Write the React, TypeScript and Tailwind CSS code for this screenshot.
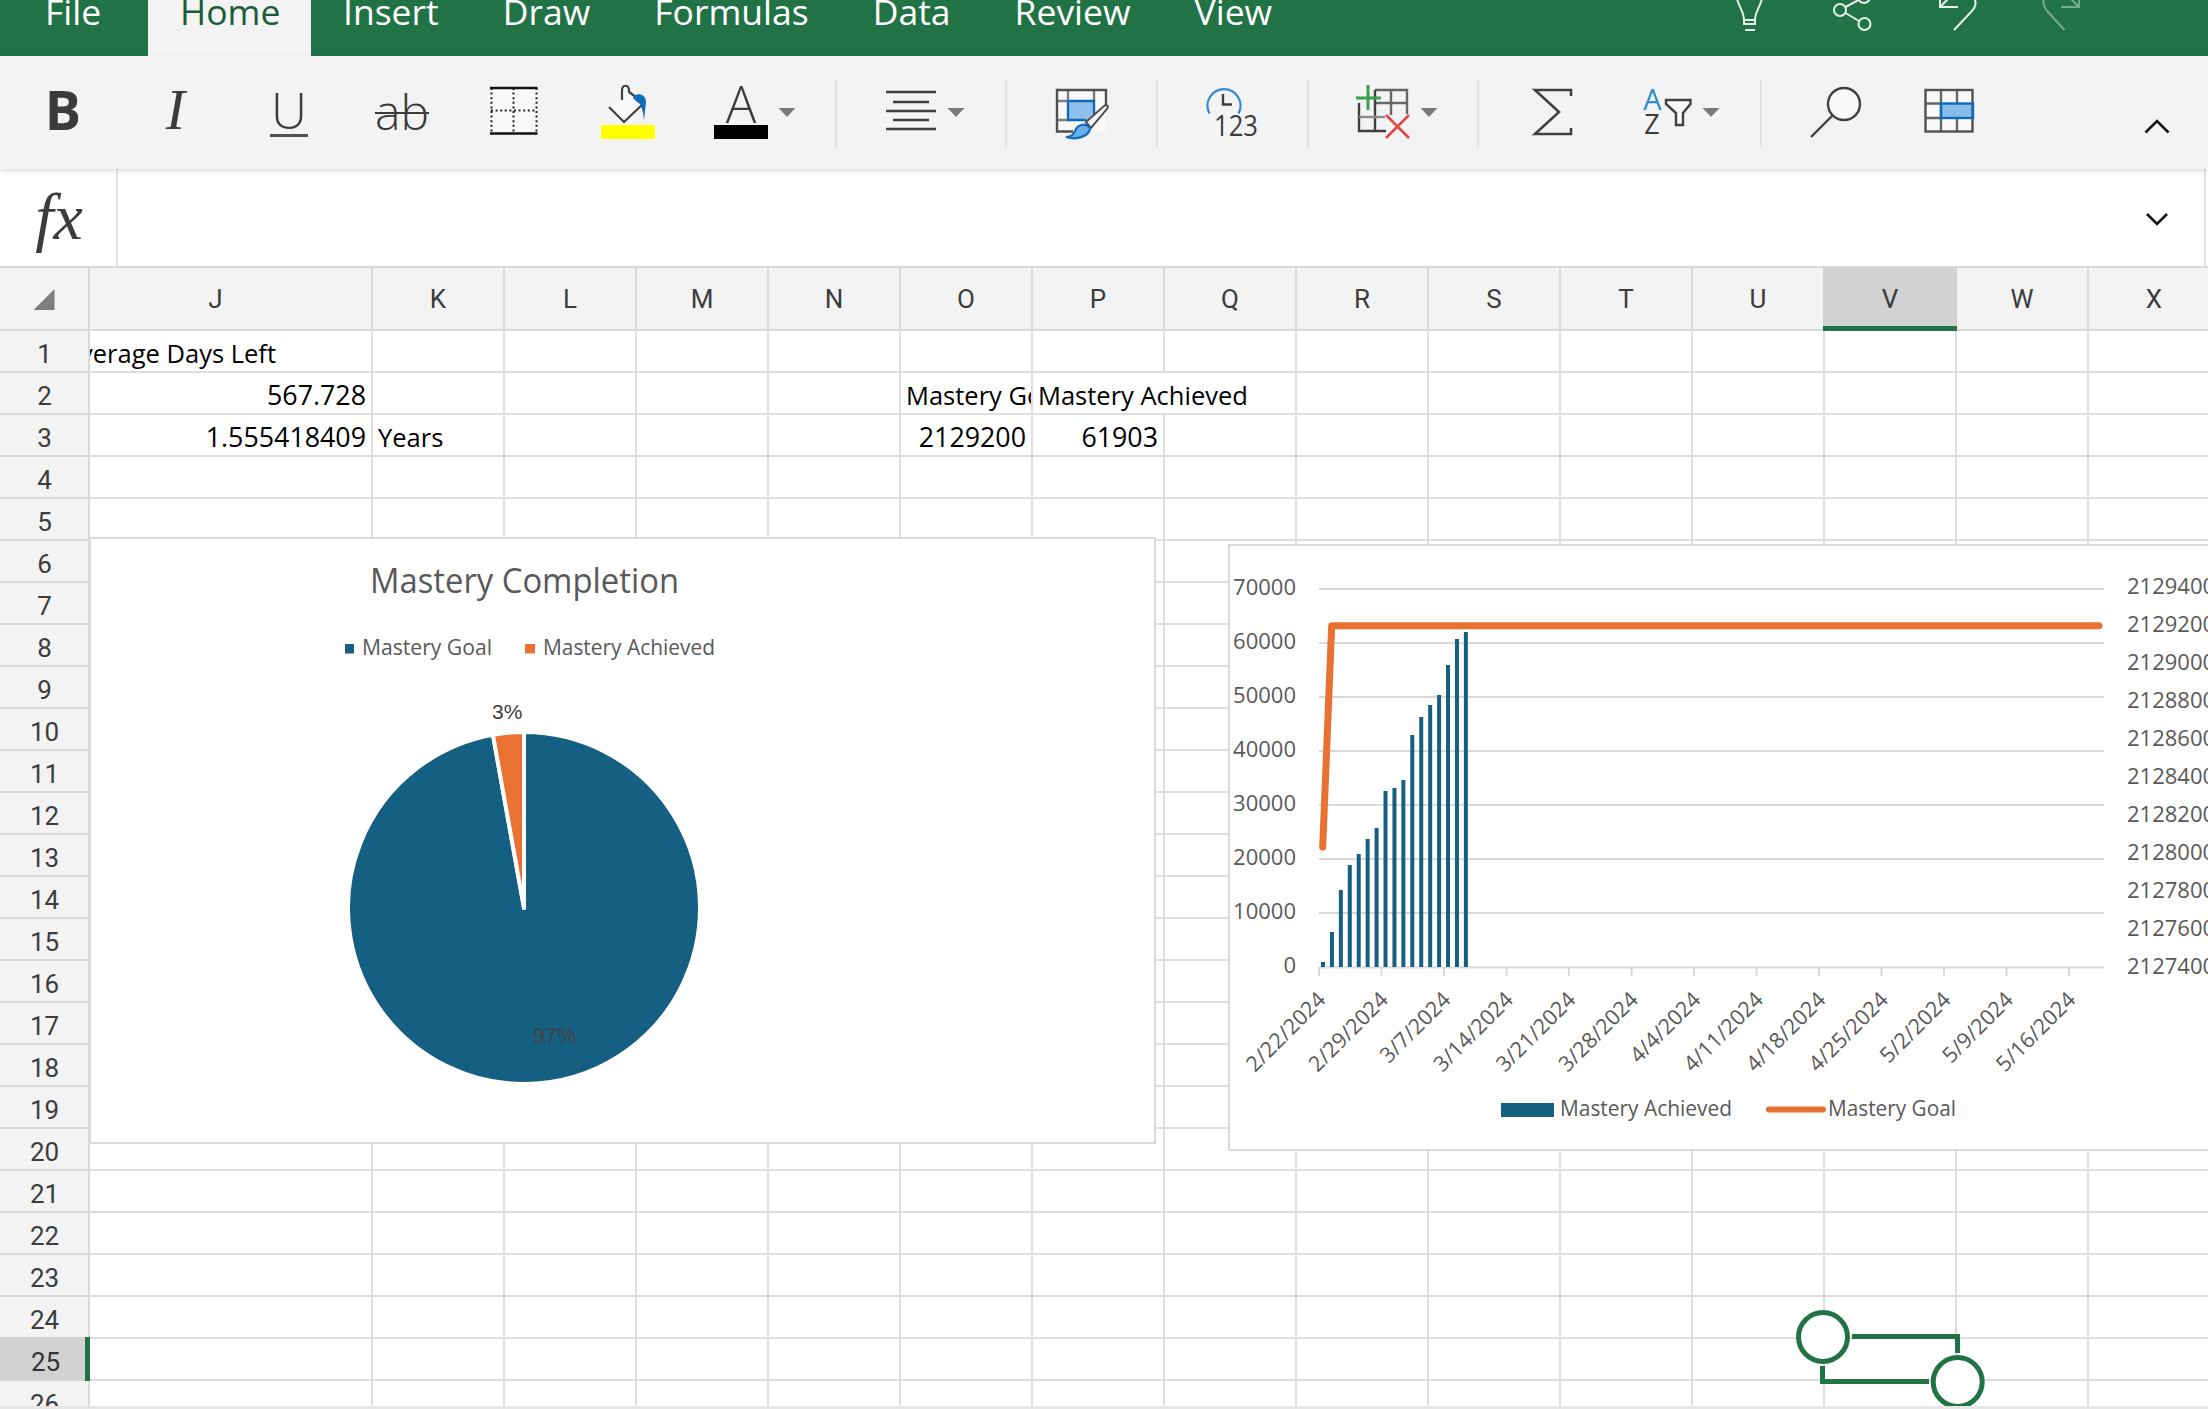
import React from "react";

const COLS = ["J", "K", "L", "M", "N", "O", "P", "Q", "R", "S", "T", "U", "V", "W", "X"];
const ROWS = Array.from({ length: 26 }, (_, i) => i + 1);

function Ico({ x, w, children }: { x: number; w: number; children: React.ReactNode }) {
  return (
    <svg width={w} height={113} viewBox={`${x} 56 ${w} 113`} className="shrink-0 block" fill="none">
      {children}
    </svg>
  );
}
const Sep = () => <div className="w-[2px] h-[68px] bg-[#e1e1e1] shrink-0" />;
const Tri = ({ cx }: { cx: number }) => <path d={`M${cx - 8.5} 108H${cx + 8.5}L${cx} 117Z`} fill="#7b7b7b" />;

function Tabs() {
  const names = ["Insert", "Draw", "Formulas", "Data", "Review", "View"];
  return (
    <div className="h-[56px] bg-[#217346] flex overflow-hidden shrink-0 relative [font-family:'Open_Sans',sans-serif] text-[35.5px] leading-[23px]">
      <div className="flex h-full whitespace-nowrap">
        <div className="pl-[45px] w-[148px] text-white h-full">File</div>
        <div className="w-[163px] pl-[32px] bg-[#f3f3f3] text-[#1a5c38] h-full">Home</div>
        {names.map((n) => (
          <div key={n} className="px-[32px] text-white h-full">
            {n}
          </div>
        ))}
      </div>
      <svg width={488} height={56} viewBox="1720 0 488 56" className="ml-auto block" fill="none">
        <g stroke="#e6f0ea" strokeWidth="2">
          <path d="M1737 -2C1738 6 1744 11 1744 20V24H1755V20C1755 11 1761 6 1762 -2" />
          <path d="M1744 20H1755M1745 30H1755" />
          <circle cx="1840" cy="10" r="6" />
          <circle cx="1864.5" cy="24" r="6" />
          <circle cx="1864" cy="-3" r="6" />
          <path d="M1845.5 7L1858.5 0M1845.5 13L1859 21" />
          <path d="M1940 -1V7H1958M1940 7L1950 -3M1968 -6C1978 -2 1977 6 1971 12L1954 30" />
          <g opacity="0.45">
            <path d="M2079 -1V7H2061M2079 7L2069 -3M2050 -6C2040 -2 2043 6 2048 12L2064.5 30" />
          </g>
        </g>
      </svg>
    </div>
  );
}

function Toolbar() {
  const stroke = "#404040";
  return (
    <div className="relative z-10 h-[113px] bg-[#f3f3f3] flex items-center shrink-0 shadow-[0_2px_5px_rgba(0,0,0,0.14)] text-[#3c3c3c]">
      <div className="w-[126px] flex justify-center pb-[7px] [font-family:'Open_Sans',sans-serif] font-bold text-[54px] leading-none">B</div>
      <div className="w-[99px] flex justify-center pb-[5px] [font-family:'Liberation_Serif',serif] italic text-[58px] leading-none">I</div>
      <div className="w-[128px] flex flex-col items-center [font-family:'Open_Sans',sans-serif] font-light">
        <span className="text-[50px] leading-[47px] border-b-[3px] border-[#505050] px-[1px] h-[50px] mt-[-2px]">U</span>
      </div>
      <div className="w-[96px] flex justify-center pb-[2px] pl-[2px] [font-family:'Open_Sans',sans-serif] font-light text-[48px] leading-none line-through decoration-2">ab</div>
      <Ico x={449} w={129}>
        <rect x="491" y="88" width="46" height="46" fill="#f9f9f9" />
        <path d="M491.5 88V134M536.5 88V134M513.5 88V134M491 110.5H537" stroke="#222" strokeWidth="2" strokeDasharray="2 2.6" />
        <path d="M490 88H537.5M490 133.5H537.5" stroke="#111" strokeWidth="2.6" />
      </Ico>
      <Ico x={578} w={114}>
        <path d="M609 107L624 122L644 103L629 92V91C629 84 622 84 622 91V100" stroke={stroke} strokeWidth="2.2" fill="#f9f9f9" strokeLinejoin="round" />
        <path d="M633 98C635 92 646 93 646 102L644 120C643 110 641 103 637 102Z" fill="#0f6cbd" />
        <rect x="601" y="125" width="54" height="14" fill="#ffff00" />
      </Ico>
      <Ico x={692} w={143}>
        <text x="741" y="123" textAnchor="middle" className="[font-family:'Open_Sans',sans-serif] font-light text-[51px] fill-[#3c3c3c]">A</text>
        <rect x="714" y="125" width="54" height="14" fill="#000" />
        <Tri cx={787} />
      </Ico>
      <Sep />
      <Ico x={837} w={168}>
        <path d="M886 92H936M893 102H929M886 111H936M893 120H929M886 129H936" stroke={stroke} strokeWidth="2.4" />
        <Tri cx={956} />
      </Ico>
      <Sep />
      <Ico x={1007} w={149}>
        <rect x="1057" y="90" width="49" height="42" fill="#f9f9f9" />
        <rect x="1068" y="101" width="26" height="19" fill="#8fc1ec" />
        <path d="M1068 90V101M1094 90V101M1057 101H1068M1057 120H1068" stroke="#7d7d7d" strokeWidth="2.4" />
        <path d="M1068 101H1094V114M1068 101V120H1086" stroke="#0f6cbd" strokeWidth="2.4" />
        <path d="M1106 105V90H1057V131.5H1073" stroke="#505050" strokeWidth="2.4" />
        <path d="M1086 122L1104 106C1107 104 1109 106 1107 109L1091 128Z" stroke="#505050" strokeWidth="2" fill="#f9f9f9" />
        <path d="M1066 137C1073 137 1074 133 1076 129C1079 124 1087 123 1090 128C1090 135 1078 141 1066 137Z" fill="#6aaee6" stroke="#0f6cbd" strokeWidth="2.2" />
      </Ico>
      <Sep />
      <Ico x={1158} w={149}>
        <path d="M1209.5 113.5A16.5 16.5 0 1 1 1238.5 113.5" stroke="#2e8ccf" strokeWidth="2.2" />
        <path d="M1223 94V104.5H1232" stroke={stroke} strokeWidth="2.4" />
        <text x="1214" y="136" textLength="44" lengthAdjust="spacingAndGlyphs" className="[font-family:'Open_Sans',sans-serif] text-[30px] fill-[#3c3c3c]">123</text>
      </Ico>
      <Sep />
      <Ico x={1309} w={168}>
        <path d="M1375 90H1407V114M1391 90V115M1375 103H1407" stroke="#666" strokeWidth="2.4" />
        <path d="M1375 90V131M1359 103V131H1386" stroke={stroke} strokeWidth="2.4" />
        <path d="M1359 117H1385" stroke="#8a8a8a" strokeWidth="2.4" />
        <path d="M1356 98H1381M1368 85V110" stroke="#3a9f4f" strokeWidth="3" />
        <path d="M1386 115L1409 138M1409 115L1386 138" stroke="#e04848" strokeWidth="2.6" />
        <Tri cx={1429} />
      </Ico>
      <Sep />
      <Ico x={1479} w={281}>
        <path d="M1571 96V90H1535L1559 112L1535 134H1571V128" stroke={stroke} strokeWidth="2.6" />
        <text x="1652.5" y="110" textAnchor="middle" className="[font-family:'Open_Sans',sans-serif] text-[29px] fill-[#2e8ccf]">A</text>
        <text x="1652" y="134" textAnchor="middle" className="[font-family:'Open_Sans',sans-serif] text-[27px] fill-[#3c3c3c]">Z</text>
        <path d="M1666 100H1690.5V104L1683 113V125H1676V113L1666 104Z" stroke={stroke} strokeWidth="2.4" fill="#f9f9f9" />
        <Tri cx={1711} />
      </Ico>
      <Sep />
      <Ico x={1762} w={368}>
        <circle cx="1844" cy="104" r="16" stroke={stroke} strokeWidth="2.4" fill="#f9f9f9" />
        <path d="M1832.5 115.5L1811 137" stroke={stroke} strokeWidth="2.4" />
        <rect x="1925.5" y="90" width="47" height="41.5" fill="#f9f9f9" />
        <rect x="1941" y="103.5" width="32" height="14.5" fill="#8abdeb" />
        <path d="M1941 90V131M1957 90V103M1957 118V131M1925.5 103.5H1941M1925.5 118H1941" stroke="#666" strokeWidth="2.4" />
        <rect x="1925.5" y="90" width="47" height="41.5" stroke="#505050" strokeWidth="2.4" />
        <rect x="1941" y="103.5" width="32" height="14.5" stroke="#0f6cbd" strokeWidth="2.4" />
      </Ico>
      <Ico x={2130} w={78}>
        <path d="M2145.5 132.5L2157 121L2168.5 132.5" stroke="#111" strokeWidth="2.6" />
      </Ico>
    </div>
  );
}

function FormulaBar() {
  return (
    <div className="h-[97px] bg-white flex items-center shrink-0 pr-[2px]">
      <div className="w-[118px] h-full border-r-2 border-[#e2e2e2] flex items-center justify-center pl-[2px] pb-[2px] [font-family:'Liberation_Serif',serif] italic text-[66px] leading-none text-[#3c3c3c]">
        fx
      </div>
      <div className="flex-1 h-full border-r-2 border-[#e2e2e2] flex items-center justify-end pr-[35px] pt-[3px]">
        <svg width="24" height="14" viewBox="0 0 24 14" fill="none">
          <path d="M2 2L12 12L22 2" stroke="#111" strokeWidth="2.6" />
        </svg>
      </div>
    </div>
  );
}

function HeaderRow() {
  return (
    <div className="flex h-[65px] border-t-2 border-[#d9d9d9] bg-[#f3f3f3] w-[2220px]">
      <div className="w-[90px] shrink-0 border-r-2 border-b-2 border-[#d9d9d9] flex items-center justify-center pt-[2px]">
        <div className="w-[21px] h-[21px] bg-[#7d7d7d] [clip-path:polygon(100%_0,100%_100%,0_100%)]" />
      </div>
      {COLS.map((c) => (
        <div
          key={c}
          className={
            c === "J"
              ? "w-[283px] shrink-0 border-r-2 border-b-2 border-[#d9d9d9] flex items-center justify-center pr-[30px] pt-[2px]"
              : c === "V"
                ? "w-[134px] ml-[-2px] shrink-0 bg-[#d2d2d2] border-b-[5px] border-[#217346] flex items-center justify-center pt-[5px]"
                : "w-[132px] shrink-0 border-r-2 border-b-2 border-[#d9d9d9] flex items-center justify-center pt-[2px]"
          }
        >
          {c}
        </div>
      ))}
    </div>
  );
}

function Row({ n }: { n: number }) {
  const cellBase = "shrink-0 h-full border-b-2 border-[#dedede] flex items-center whitespace-nowrap text-black pt-[4px]";
  const c = "w-[132px] border-r-2";
  const num = "text-[26.8px]";
  const cell = (col: string) => {
    if (n === 1 && col === "J")
      return (
        <div key={col} className={`${cellBase} w-[283px] border-r-2 overflow-hidden justify-end pr-[95px]`}>
          Average Days Left
        </div>
      );
    if (col === "J") {
      const t = n === 2 ? "567.728" : n === 3 ? "1.555418409" : "";
      return (
        <div key={col} className={`${cellBase} ${num} w-[283px] border-r-2 justify-end pr-[5px]`}>
          {t}
        </div>
      );
    }
    if (n === 3 && col === "K")
      return (
        <div key={col} className={`${cellBase} ${c} pl-[5px]`}>
          Years
        </div>
      );
    if (n === 2 && col === "O")
      return (
        <div key={col} className={`${cellBase} ${c} pl-[5px] overflow-hidden`}>
          Mastery Goal
        </div>
      );
    if (n === 2 && col === "P")
      return (
        <div key={col} className={`${cellBase} w-[132px] pl-[5px] overflow-visible`}>
          Mastery Achieved
        </div>
      );
    if (n === 3 && col === "O")
      return (
        <div key={col} className={`${cellBase} ${c} ${num} justify-end pr-[5px]`}>
          2129200
        </div>
      );
    if (n === 3 && col === "P")
      return (
        <div key={col} className={`${cellBase} ${c} ${num} justify-end pr-[5px]`}>
          61903
        </div>
      );
    return <div key={col} className={`${cellBase} ${c}`} />;
  };
  return (
    <div className="flex h-[42px] w-[2220px]">
      <div
        className={
          n === 25
            ? "w-[90px] shrink-0 h-[44px] mt-[-2px] bg-[#d2d2d2] border-r-[5px] border-[#217346] flex items-center justify-center pl-[6px] pt-[7px] text-[#333] text-[26px]"
            : "w-[90px] shrink-0 bg-[#f3f3f3] border-r-2 border-b-2 border-[#d9d9d9] flex items-center justify-center pl-[1px] pt-[6px] text-[#3c3c3c] text-[26px]"
        }
      >
        {n}
      </div>
      <div className="flex h-full [font-family:'Open_Sans',sans-serif] text-[25.5px]">{COLS.map(cell)}</div>
    </div>
  );
}

function PieChart() {
  const cx = 524, cy = 908, r = 176;
  const a = (349.83 * Math.PI) / 180;
  const px = cx + r * Math.sin(a);
  const py = cy - r * Math.cos(a);
  return (
    <div className="absolute left-[89px] top-[271px] w-[1067px] h-[607px] bg-white border-2 border-[#d9d9d9]">
      <svg width={1063} height={603} viewBox="91 539 1063 603" className="block [font-family:'Open_Sans',sans-serif]">
        <text x="370" y="593" textLength="309" lengthAdjust="spacingAndGlyphs" className="text-[34px] fill-[#595959]">Mastery Completion</text>
        <rect x="345" y="644" width="9" height="9.5" fill="#156082" />
        <text x="362" y="655" textLength="130" lengthAdjust="spacingAndGlyphs" className="text-[21px] fill-[#595959]">Mastery Goal</text>
        <rect x="525" y="644" width="10" height="9.5" fill="#e97132" />
        <text x="543" y="655" textLength="172" lengthAdjust="spacingAndGlyphs" className="text-[21px] fill-[#595959]">Mastery Achieved</text>
        <path d={`M${cx} ${cy}L${cx} ${cy - r}A${r} ${r} 0 1 1 ${px} ${py}Z`} fill="#156082" stroke="#fff" strokeWidth="4" strokeLinejoin="round" />
        <path d={`M${cx} ${cy}L${px} ${py}A${r} ${r} 0 0 1 ${cx} ${cy - r}Z`} fill="#e97132" stroke="#fff" strokeWidth="4" strokeLinejoin="round" />
        <text x="492" y="719" className="[font-family:'Liberation_Sans',sans-serif] text-[21px] fill-[#404040]">3%</text>
        <text x="533" y="1043" className="[font-family:'Liberation_Sans',sans-serif] text-[21.5px] fill-[#404040]">97%</text>
      </svg>
    </div>
  );
}

function ComboChart() {
  const gridY = [589, 643, 697, 751, 805, 859, 913];
  const left = ["70000", "60000", "50000", "40000", "30000", "20000", "10000", "0"];
  const right = ["2129400", "2129200", "2129000", "2128800", "2128600", "2128400", "2128200", "2128000", "2127800", "2127600", "2127400"];
  const dates = ["2/22/2024", "2/29/2024", "3/7/2024", "3/14/2024", "3/21/2024", "3/28/2024", "4/4/2024", "4/11/2024", "4/18/2024", "4/25/2024", "5/2/2024", "5/9/2024", "5/16/2024"];
  const tops = [962, 932, 890, 865, 854, 839, 828, 791, 788, 780, 735, 717, 705, 695, 665, 639, 632];
  return (
    <div className="absolute left-[1228px] top-[278px] w-[1000px] h-[607px] bg-white border-2 border-[#d9d9d9]">
      <svg width={996} height={603} viewBox="1230 546 996 603" className="block [font-family:'Open_Sans',sans-serif] text-[22px] fill-[#595959]">
        {gridY.map((y) => (
          <path key={y} d={`M1319 ${y}H2104`} stroke="#d9d9d9" strokeWidth="2" />
        ))}
        <path d="M1319 967.5H2104" stroke="#d9d9d9" strokeWidth="2" />
        {dates.map((d, i) => (
          <path key={d} d={`M${1319 + 62.5 * i} 967V976`} stroke="#d9d9d9" strokeWidth="2" />
        ))}
        {left.map((t, i) => (
          <text key={t} x="1296" y={594.6 + 54.05 * i} textAnchor="end">{t}</text>
        ))}
        {right.map((t, i) => (
          <text key={t} x="2127" y={594 + 38 * i}>{t}</text>
        ))}
        {dates.map((d, i) => {
          const x = 1327 + 62.5 * i;
          return (
            <text key={d} x={x} y={1001} textAnchor="end" transform={`rotate(-45 ${x} 1001)`} className="text-[21.5px]">{d}</text>
          );
        })}
        {tops.map((t, i) => (
          <rect key={i} x={1321 + 8.93 * i} y={t} width="4" height={967 - t} fill="#156082" />
        ))}
        <path d="M1322.7 847L1331.7 625.7H2099" fill="none" stroke="#e97132" strokeWidth="7" strokeLinecap="round" strokeLinejoin="round" />
        <rect x="1501" y="1103" width="53" height="14" fill="#156082" />
        <text x="1560" y="1116" textLength="172" lengthAdjust="spacingAndGlyphs" className="text-[21px]">Mastery Achieved</text>
        <path d="M1769 1109.5H1823" stroke="#e97132" strokeWidth="6" strokeLinecap="round" />
        <text x="1828" y="1116" textLength="128" lengthAdjust="spacingAndGlyphs" className="text-[21px]">Mastery Goal</text>
      </svg>
    </div>
  );
}

function SelectionHandles() {
  return (
    <svg width={240} height={120} viewBox="1780 1300 240 120" className="absolute left-[1780px] top-[1034px] block" fill="none" stroke="#217346">
      <circle cx="1823" cy="1337" r="24.5" strokeWidth="5" fill="#fff" />
      <circle cx="1957.7" cy="1382" r="24.5" strokeWidth="5" fill="#fff" />
      <path d="M1852 1336.5H1957.5V1353" strokeWidth="5" />
      <path d="M1822.5 1366V1381.5H1929" strokeWidth="5" />
    </svg>
  );
}

export default function App() {
  return (
    <div className="h-[1409px] w-[2208px] overflow-hidden flex flex-col bg-white [font-family:'Roboto',sans-serif]">
      <Tabs />
      <Toolbar />
      <FormulaBar />
      <div className="relative flex-1 min-h-0 overflow-hidden text-[#3c3c3c] text-[26px]">
        <HeaderRow />
        {ROWS.map((n) => (
          <Row key={n} n={n} />
        ))}
        <PieChart />
        <ComboChart />
        <SelectionHandles />
      </div>
      <div className="h-[3px] bg-[#e6e6e6] shrink-0" />
    </div>
  );
}
